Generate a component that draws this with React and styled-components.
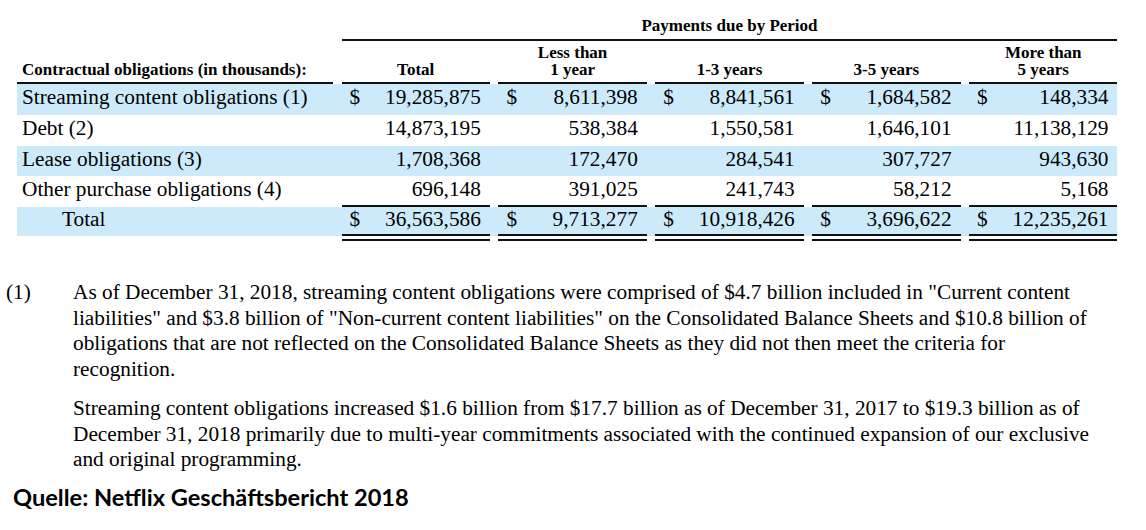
import React from "react";
import styled, { createGlobalStyle } from "styled-components";

const GlobalStyle = createGlobalStyle`
  body {
    margin: 0;
    background: #ffffff;
    color: #000000;
    font-family: "Liberation Serif", "Times New Roman", serif;
  }
`;

const Page = styled.div`
  width: 1146px;
  height: 530px;
  padding-top: 15px;
  box-sizing: border-box;
  overflow: hidden;
`;

const Table = styled.div`
  margin-left: 17px;
  width: 1100px;
`;

const COLS = "316px repeat(5, 148.4px)";

const PeriodRow = styled.div`
  display: grid;
  grid-template-columns: ${COLS};
  column-gap: 8.5px;
`;

const PeriodTitle = styled.div`
  grid-column: 2 / span 5;
  text-align: center;
  font-weight: bold;
  font-size: 17px;
  line-height: 22px;
  padding-bottom: 2px;
  border-bottom: 2px solid #111;
`;

const Row = styled.div`
  display: grid;
  grid-template-columns: ${COLS};
  column-gap: 8.5px;
  background: ${({ $shaded }) => ($shaded ? "#cdeafb" : "transparent")};
  height: ${({ $h }) => $h || 30.75}px;
`;

const HeadCell = styled.div`
  display: flex;
  flex-direction: column;
  justify-content: flex-end;
  align-items: ${({ $left }) => ($left ? "flex-start" : "center")};
  padding-left: ${({ $left }) => ($left ? "5px" : "0")};
  text-align: center;
  font-weight: bold;
  font-size: 17px;
  line-height: 17px;
  padding-bottom: 4px;
  border-bottom: 2px solid #111;
`;

const Label = styled.div`
  font-size: 21.3px;
  line-height: ${({ $indent }) => ($indent ? "25px" : "27px")};
  padding-left: ${({ $indent }) => ($indent ? "45px" : "5px")};
  white-space: nowrap;
`;

const Cell = styled.div`
  display: flex;
  justify-content: space-between;
  font-size: 21.3px;
  line-height: 27px;
  padding: 0 9px 0 8px;
  box-sizing: border-box;
  white-space: nowrap;
  height: 30px;
`;

const TotalCell = styled(Cell)`
  margin-top: -2px;
  height: 36px;
  line-height: 25px;
  border-top: 2px solid #111;
  border-bottom: 7px double #111;
`;

const Notes = styled.div`
  margin-top: 44px;
  display: grid;
  grid-template-columns: 67px 1fr;
  padding-left: 6px;
  font-size: 21.3px;
  line-height: 25.5px;
`;

const NoteMark = styled.div`
  grid-row: 1 / span 2;
`;

const Para = styled.p`
  margin: 0 0 ${({ $gap }) => $gap || 0}px 0;
  white-space: nowrap;
  span {
    display: block;
  }
`;

const Source = styled.div`
  margin-top: 10px;
  padding-left: 13px;
  font-family: Lato, "Open Sans", sans-serif;
  font-weight: bold;
  font-size: 23.6px;
  line-height: 28px;
`;

const columns = [
  ["Total"],
  ["Less than", "1 year"],
  ["1-3 years"],
  ["3-5 years"],
  ["More than", "5 years"],
];

const rows = [
  {
    label: "Streaming content obligations (1)",
    dollar: true,
    values: ["19,285,875", "8,611,398", "8,841,561", "1,684,582", "148,334"],
  },
  {
    label: "Debt (2)",
    values: ["14,873,195", "538,384", "1,550,581", "1,646,101", "11,138,129"],
  },
  {
    label: "Lease obligations (3)",
    values: ["1,708,368", "172,470", "284,541", "307,727", "943,630"],
  },
  {
    label: "Other purchase obligations (4)",
    values: ["696,148", "391,025", "241,743", "58,212", "5,168"],
  },
];

const totals = ["36,563,586", "9,713,277", "10,918,426", "3,696,622", "12,235,261"];

export default function App() {
  return (
    <Page>
      <GlobalStyle />
      <Table>
        <PeriodRow>
          <PeriodTitle>Payments due by Period</PeriodTitle>
        </PeriodRow>
        <Row $h={43}>
          <HeadCell $left>Contractual obligations (in thousands):</HeadCell>
          {columns.map((c) => (
            <HeadCell key={c.join()}>
              {c.map((l) => (
                <span key={l}>{l}</span>
              ))}
            </HeadCell>
          ))}
        </Row>
        {rows.map((r, i) => (
          <Row key={r.label} $shaded={i % 2 === 0}>
            <Label>{r.label}</Label>
            {r.values.map((v) => (
              <Cell key={v}>
                <span>{r.dollar ? "$" : ""}</span>
                <span>{v}</span>
              </Cell>
            ))}
          </Row>
        ))}
        <Row $shaded $h={29}>
          <Label $indent>Total</Label>
          {totals.map((v) => (
            <TotalCell key={v}>
              <span>$</span>
              <span>{v}</span>
            </TotalCell>
          ))}
        </Row>
      </Table>
      <Notes>
        <NoteMark>(1)</NoteMark>
        <Para $gap={14}>
          <span>
            As of December 31, 2018, streaming content obligations were comprised of $4.7 billion included in "Current content
          </span>
          <span>
            liabilities" and $3.8 billion of "Non-current content liabilities" on the Consolidated Balance Sheets and $10.8 billion of
          </span>
          <span>
            obligations that are not reflected on the Consolidated Balance Sheets as they did not then meet the criteria for
          </span>
          <span>recognition.</span>
        </Para>
        <Para>
          <span>
            Streaming content obligations increased $1.6 billion from $17.7 billion as of December 31, 2017 to $19.3 billion as of
          </span>
          <span>
            December 31, 2018 primarily due to multi-year commitments associated with the continued expansion of our exclusive
          </span>
          <span>and original programming.</span>
        </Para>
      </Notes>
      <Source>Quelle: Netflix Geschäftsbericht 2018</Source>
    </Page>
  );
}
